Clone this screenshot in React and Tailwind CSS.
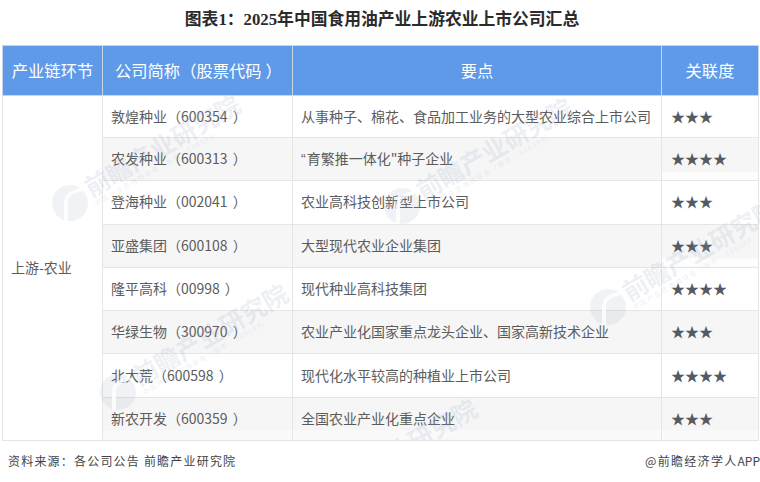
const rows = [
  ["敦煌种业", "600354", "从事种子、棉花、食品加工业务的大型农业综合上市公司", "★★★"],
  ["农发种业", "600313", "育繁推一体化\"种子企业", "★★★★"],
  ["登海种业", "002041", "农业高科技创新型上市公司", "★★★"],
  ["亚盛集团", "600108", "大型现代农业企业集团", "★★★"],
  ["隆平高科", "00998", "现代种业高科技集团", "★★★★"],
  ["华绿生物", "300970", "农业产业化国家重点龙头企业、国家高新技术企业", "★★★"],
  ["北大荒", "600598", "现代化水平较高的种植业上市公司", "★★★★"],
  ["新农开发", "600359", "全国农业产业化重点企业", "★★★"],
];

const cell = "border border-[#e5e5e5] pb-[1px]";
// the source image has a paler strip at the foot of some grey cells
const lastRow = "bg-[linear-gradient(#f6f6f6_33px,#fafafa_33px)]";
const starStrip = "bg-[linear-gradient(#f6f6f6_34px,#fdfdfd_34px)]";

function Watermark({ className }) {
  return (
    <div className={`absolute flex items-center gap-[3px] origin-[18px_18px] -rotate-[30deg] text-[#9fb0c8]/20 ${className}`}>
      <svg width="36" height="36" viewBox="0 0 36 36" className="shrink-0">
        <g transform="rotate(30 18 18)">
          <circle cx="18" cy="18" r="18" fill="#9fb0c8" fillOpacity="0.16" />
          <path d="M14 36V17Q14 10 22 7L33 3" fill="none" stroke="#fff" strokeOpacity="0.8" strokeWidth="4" />
        </g>
      </svg>
      <div>
        <div className="text-[25px] leading-[27px] font-bold whitespace-nowrap">前瞻产业研究院</div>
        <div className="text-[7px] leading-[9px] tracking-[1.2px] whitespace-nowrap">中国产业咨询领导者（股票：839599）</div>
      </div>
    </div>
  );
}

export default function App() {
  return (
    <div className="relative w-[760px] h-[482px] bg-white overflow-hidden font-['Noto_Sans_CJK_SC','Liberation_Sans',sans-serif]">
      <h1 className="h-[45px] pt-[7px] pl-[4px] text-center text-[16.8px] leading-[26px] font-bold text-[#2b2b2b] font-['Liberation_Serif','Noto_Sans_CJK_SC',serif]">
        图表1：2025年中国食用油产业上游农业上市公司汇总
      </h1>

      <table className="ml-[2px] w-[756px] table-fixed border-collapse text-[14px] text-[#5c5c5c]">
        <colgroup>
          <col className="w-[100px]" />
          <col className="w-[190px]" />
          <col className="w-[369px]" />
          <col className="w-[97px]" />
        </colgroup>
        <thead>
          <tr className="h-[50px] bg-[#5f9ae8] text-[16.3px] text-white">
            <th className="border border-[#c9d6e6] font-normal">产业链环节</th>
            <th className="border border-[#c9d6e6] font-normal text-left pl-[12px]">
              公司简称（<span className="mr-[4px]">股票代码</span>）
            </th>
            <th className="border border-[#c9d6e6] font-normal">要点</th>
            <th className="border border-[#c9d6e6] font-normal">关联度</th>
          </tr>
        </thead>
        <tbody>
          {rows.map((r, i) => (
            <tr key={r[0]} className={`${i === 0 ? "h-[42px]" : "h-[43.3px]"} ${i % 2 ? "bg-[#f6f6f6]" : ""}`}>
              {i === 0 && (
                <td rowSpan={8} className={`${cell} bg-white pl-[8px]`}>上游-农业</td>
              )}
              <td className={`${cell} pl-[8px] ${i === 7 ? lastRow : ""}`}>
                {r[0]}（<span className="mr-[5px]">{r[1]}</span>）
              </td>
              <td className={`${cell} pl-[8px] ${i === 7 ? lastRow : ""}`}>
                {i === 1 && <span className="font-['Liberation_Sans'] mr-[1px]">“</span>}
                {r[2]}
              </td>
              <td className={`${cell} pl-[9px] text-[#525a64] ${i === 7 ? lastRow : i === 1 || i === 3 ? starStrip : ""}`}>{r[3]}</td>
            </tr>
          ))}
        </tbody>
      </table>

      <div className="flex justify-between mt-[11px] pl-[8px] text-[12px] leading-[18px] text-[#444]">
        <span className="tracking-[1.2px]">资料来源：各公司公告 前瞻产业研究院</span>
        <span>
          <span className="tracking-[1.3px]">@前瞻经济学人</span>APP
        </span>
      </div>

      {/* watermarks are cut off at the table body */}
      <div className="absolute left-0 top-[95px] w-[760px] h-[345px] overflow-hidden">
        <Watermark className="left-[52px] top-[90px]" />
        <Watermark className="left-[384px] top-[93px]" />
        <Watermark className="left-[590px] top-[194px]" />
        <Watermark className="left-[100px] top-[279px]" />
        <Watermark className="left-[289px] top-[394px]" />
      </div>
    </div>
  );
}
